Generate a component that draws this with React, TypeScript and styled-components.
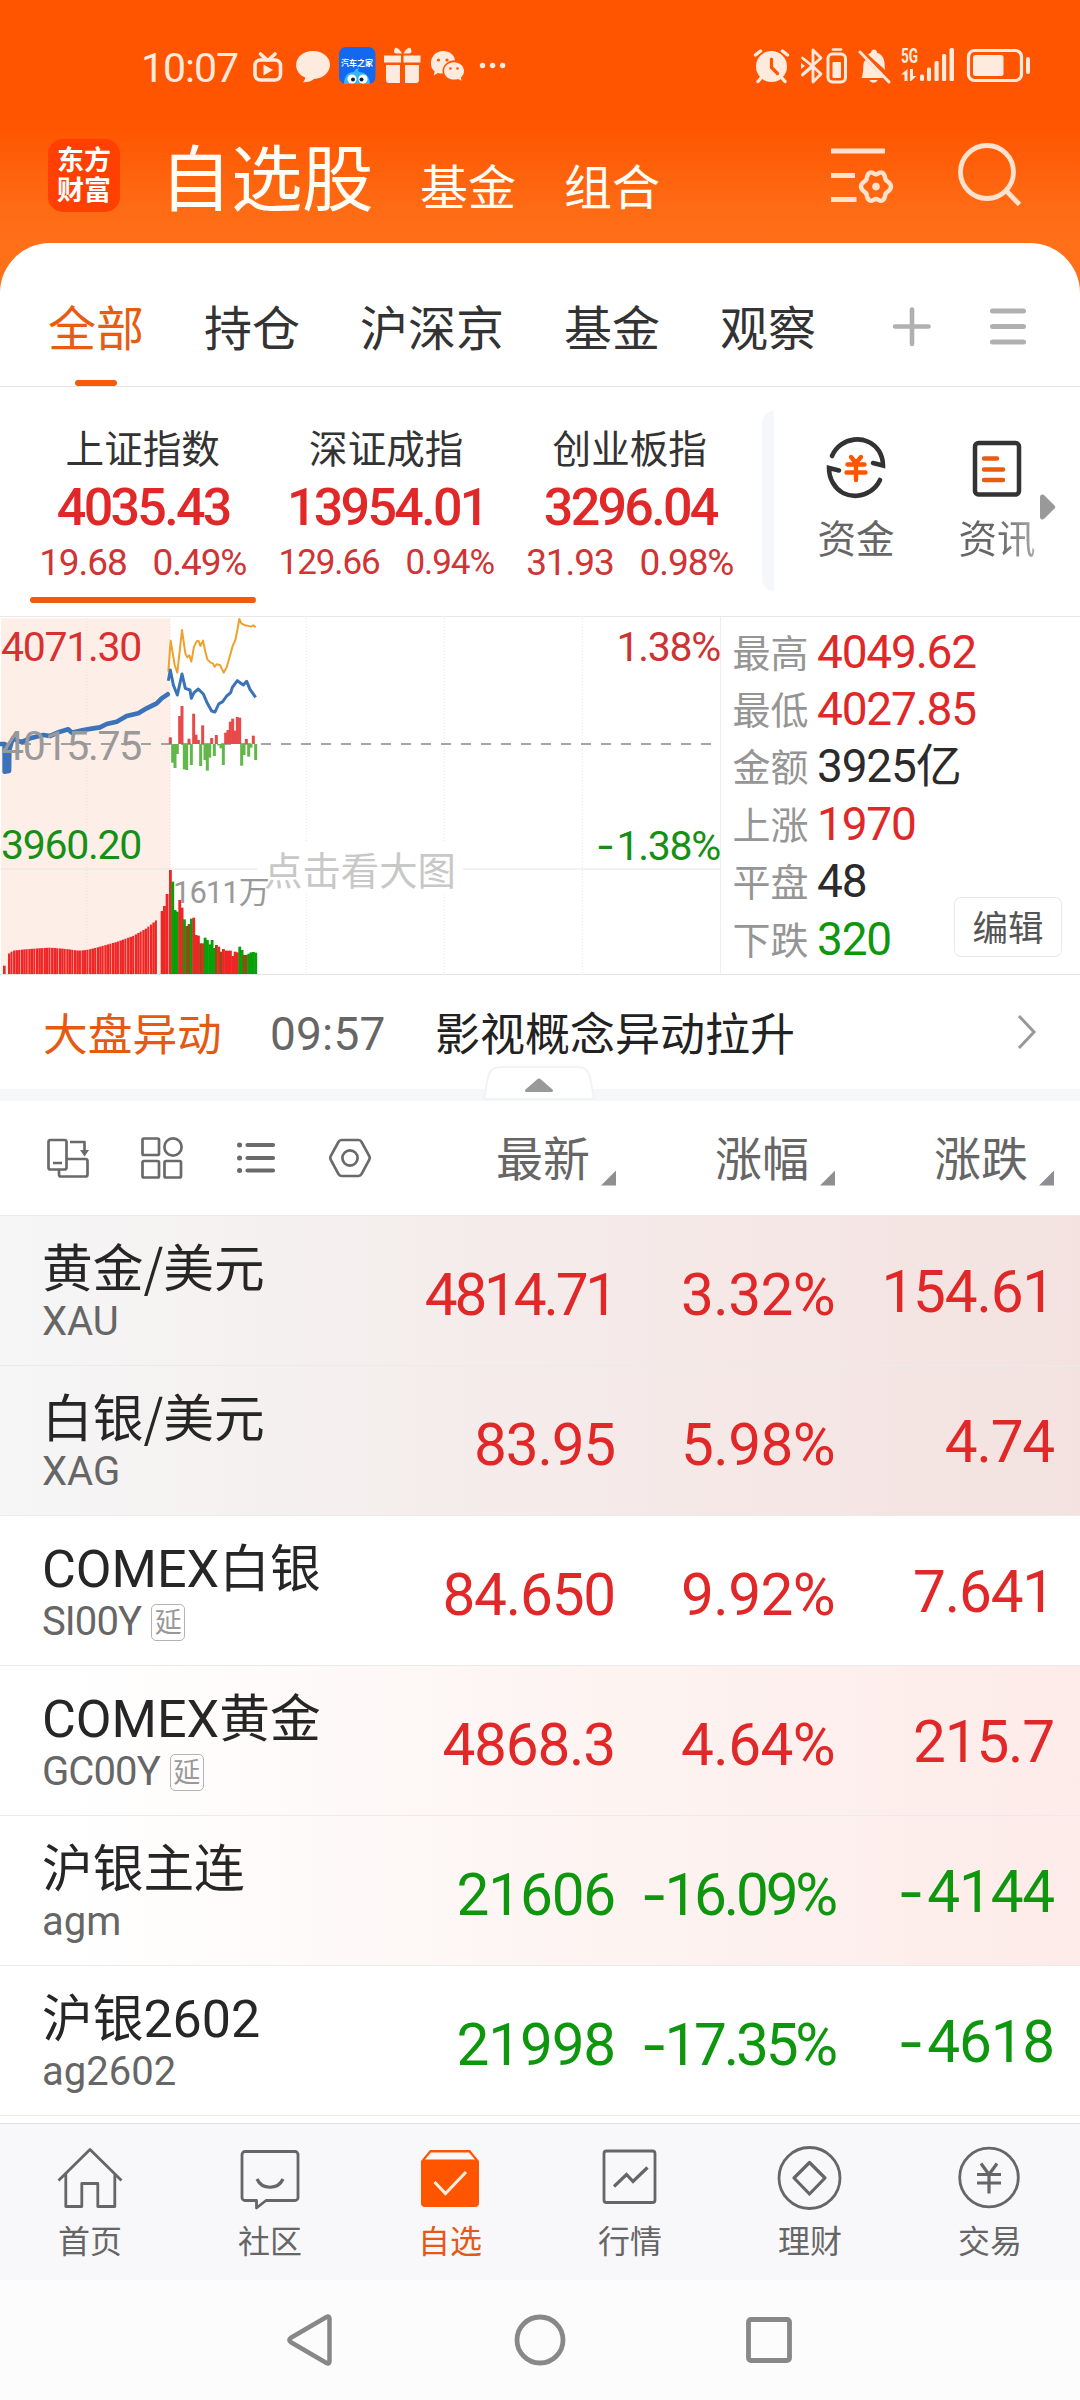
import React from "react";
import styled, { createGlobalStyle } from "styled-components";

const RED = "#e02828";
const GREEN = "#0e970e";
const ORANGE = "#ff5500";
const INK = "#2b2b2b";
const GRAY = "#666666";

const tone = { red: RED, green: GREEN, ink: INK, gray: GRAY };
type Tone = keyof typeof tone;

const Global = createGlobalStyle`
  * { box-sizing: border-box; }
  body { margin: 0; background: #fff; }
`;

const Page = styled.div`
  width: 1080px;
  height: 2400px;
  overflow: hidden;
  display: flex;
  flex-direction: column;
  background: #fff;
  color: ${INK};
  font-family: Roboto, "Noto Sans CJK SC", sans-serif;
`;

/* ---------- header ---------- */

const Top = styled.header`
  display: flex;
  flex-direction: column;
  background: linear-gradient(#ff5500 125px, #ff6a14 205px, #ff7019 243px);
`;

const StatusBar = styled.div`
  height: 130px;
  display: flex;
  align-items: center;
  justify-content: space-between;
  padding: 0 50px 0 141px;
  color: #ffeade;
`;

const StatusGroup = styled.div`
  display: flex;
  align-items: center;
`;

const Clock = styled.div`
  font-size: 41px;
  line-height: 48px;
  letter-spacing: -1px;
  width: 111px;
  padding-top: 5px;
`;

const TitleBar = styled.div`
  height: 113px;
  display: flex;
  padding: 0 58px 0 48px;
`;

const Logo = styled.div`
  width: 72px;
  height: 73px;
  margin-top: 9px;
  border-radius: 15px;
  background: #ff4000;
  color: #fff;
  display: grid;
  align-content: center;
  justify-content: center;
  font: 700 27px/30px "Noto Sans CJK SC", sans-serif;
  padding-bottom: 3px;
`;

const Titles = styled.nav`
  display: flex;
  align-items: baseline;
  margin-left: 40px;
  padding-top: 2px;
  flex: 1;
  color: #fffdf5;
  font-family: "Noto Sans CJK SC", sans-serif;
  line-height: 84px;
`;

const MainTitle = styled.span`
  font-size: 71.5px;
  letter-spacing: -0.5px;
  margin-right: 47px;
`;

const SubTitle = styled.span`
  font-size: 48px;
  margin-right: 48px;
`;

/* ---------- group tabs ---------- */

const Tabs = styled.div`
  height: 144px;
  display: flex;
  align-items: flex-start;
  gap: 60px;
  padding: 47px 52px 0 48px;
  border-bottom: 1px solid #e4e4e4;
  border-radius: 50px 50px 0 0;
  background: #fff;
`;

const Tab = styled.div<{ $active?: boolean }>`
  display: flex;
  flex-direction: column;
  align-items: center;
  font: 400 48px/70px "Noto Sans CJK SC", sans-serif;
  color: ${(p) => (p.$active ? "#e85c12" : "#333")};

  &::after {
    content: "";
    width: 42px;
    height: 6px;
    margin-top: 20px;
    border-radius: 3px;
    background: ${(p) => (p.$active ? "#f8590a" : "transparent")};
  }
`;

const TabTools = styled.div`
  margin: 12px 0 0 auto;
  display: flex;
  gap: 55px;
`;

/* ---------- index strip ---------- */

const Strip = styled.section`
  height: 229px;
  display: flex;
  padding-left: 21px;
`;

const IndexCell = styled.div`
  width: 243.5px;
  display: flex;
  flex-direction: column;
  align-items: center;
  padding-top: 37px;
  white-space: nowrap;
`;

const IndexName = styled.div`
  font: 400 38.6px/44px "Noto Sans CJK SC", sans-serif;
  color: #333;
`;

const IndexValue = styled.div`
  font-size: 52px;
  font-weight: 500;
  line-height: 52px;
  letter-spacing: -2.7px;
  margin: 14px 0 0 1px;
  color: ${RED};
`;

const IndexChange = styled.div<{ $size: number }>`
  display: flex;
  gap: 26px;
  margin-top: 9px;
  font-size: ${(p) => p.$size}px;
  line-height: 40px;
  letter-spacing: -1.1px;
  color: #d03434;
`;

const IndexMark = styled.div`
  width: 226px;
  height: 6px;
  margin-top: 14px;
  border-radius: 3px;
  background: #f25a0c;
`;

const StripEdge = styled.div`
  width: 12px;
  height: 180px;
  margin: 24px 0 0 10.5px;
  border-radius: 12px 0 0 12px;
  background: #f6f7fa;
`;

const Shortcut = styled.div<{ $left: number }>`
  display: flex;
  flex-direction: column;
  align-items: center;
  width: 78px;
  margin-left: ${(p) => p.$left}px;
  padding-top: 49px;
`;

const ShortcutText = styled.span<{ $fade?: boolean }>`
  font: 400 38.5px/44px "Noto Sans CJK SC", sans-serif;
  margin-top: 14px;
  color: ${GRAY};
  ${(p) =>
    p.$fade &&
    "background: linear-gradient(90deg, #666 50%, #aaa); background-clip: text; color: transparent;"}
`;

const MoreArrow = styled.svg`
  margin: 107px 0 0 4px;
`;

/* ---------- market chart ---------- */

const Market = styled.section`
  height: 359px;
  display: flex;
  border-top: 1px solid #e9e9e9;
  border-bottom: 1px solid #e4e4e4;
`;

const ChartBox = styled.div`
  position: relative;
  width: 721px;
  height: 357px;
  border-right: 1px solid #efefef;
`;

const ChartSvg = styled.svg`
  display: block;
`;

const ChartLabel = styled.span<{ $y: number; $c: string; $right?: boolean }>`
  position: absolute;
  top: ${(p) => p.$y}px;
  ${(p) => (p.$right ? "right: 0;" : "left: 1px;")}
  font-size: 41px;
  line-height: 44px;
  letter-spacing: -1.3px;
  color: ${(p) => p.$c};
`;

const VolumeLabel = styled.span`
  position: absolute;
  left: 173px;
  top: 256px;
  font-size: 31px;
  line-height: 40px;
  letter-spacing: -1px;
  color: #999;
`;

const TapHint = styled.span`
  position: absolute;
  left: 257px;
  top: 226px;
  width: 206px;
  text-align: center;
  font: 400 38.4px/50px "Noto Sans CJK SC", sans-serif;
  color: #c8c8c8;
  background: linear-gradient(90deg, transparent 10px, #fff 10px);
`;

const Facts = styled.div`
  flex: 1;
  display: flex;
  flex-direction: column;
  padding: 5px 0 0 11.5px;
`;

const Fact = styled.div`
  height: 57.4px;
  display: flex;
  align-items: center;
  gap: 8.5px;
`;

const FactName = styled.span`
  font: 400 38px/56px "Noto Sans CJK SC", sans-serif;
  color: #959595;
`;

const FactValue = styled.span<{ $tone: Tone }>`
  font-size: 46px;
  line-height: 57px;
  letter-spacing: -1.2px;
  padding-top: 3px;
  color: ${(p) => tone[p.$tone]};
`;

const EditButton = styled.button`
  align-self: flex-end;
  width: 108px;
  height: 60px;
  margin: -69px 18px 0 0;
  padding: 0 0 2px;
  border: 1.5px solid #e8e8e8;
  border-radius: 7px;
  background: #fff;
  color: #555;
  font: 400 35.5px/54px "Noto Sans CJK SC", sans-serif;
`;

/* ---------- news line ---------- */

const News = styled.section`
  position: relative;
  height: 126px;
  display: flex;
  align-items: flex-start;
  padding: 26px 42px 0 43px;
  border-bottom: 12px solid #f5f7f9;
  font-size: 45px;
  line-height: 62px;
  white-space: nowrap;
`;

const NewsTag = styled.span`
  width: 227px;
  font-family: "Noto Sans CJK SC", sans-serif;
  color: #e55a10;
  font-size: 44.7px;
`;

const NewsTime = styled.span`
  width: 165px;
  padding-top: 2px;
  font-size: 46px;
  letter-spacing: 0.2px;
  color: #666;
`;

const NewsText = styled.span`
  flex: 1;
  font-family: "Noto Sans CJK SC", sans-serif;
  color: #222;
`;

const NewsChevron = styled.svg`
  margin-top: 13px;
`;

const FoldHandle = styled.svg`
  position: absolute;
  left: 483px;
  top: 90px;
`;

/* ---------- table ---------- */

const TableHead = styled.section`
  height: 114px;
  display: flex;
  align-items: center;
  padding-left: 45px;
`;

const ViewIcons = styled.div`
  width: 352px;
  display: flex;
  gap: 48px;
`;

const HeadCell = styled.div`
  width: 219px;
  display: flex;
  justify-content: flex-end;
  align-items: flex-end;
  gap: 11px;
  padding-bottom: 5px;
  font: 400 47px/70px "Noto Sans CJK SC", sans-serif;
  color: #666;
`;

const SortMark = styled.i`
  width: 15px;
  height: 15px;
  margin-bottom: 5px;
  background: #8e8e93;
  clip-path: polygon(100% 0, 100% 100%, 0 100%);
`;

const rowFill = {
  plain: "#fff",
  held: "linear-gradient(90deg, #f6f6f6, #f4eeed 35%, #f5e9e8 62%, #f3e2e0)",
  flash: "linear-gradient(90deg, #fff 5%, #fdf6f4 45%, #fdebe9)",
};

const Row = styled.div<{ $fill: keyof typeof rowFill }>`
  height: 150px;
  display: grid;
  grid-template-columns: 353px 220px 220px 219px;
  padding-left: 42px;
  border-top: 1px solid #ebebeb;
  background: ${(p) => rowFill[p.$fill]};
  white-space: nowrap;
`;

const NameCell = styled.div`
  display: flex;
  flex-direction: column;
  padding-top: 16px;
`;

const StockName = styled.div`
  height: 66px;
  font: 400 50.7px/66px "Noto Sans CJK SC", sans-serif;
  color: #262626;
`;

const Latin = styled.span`
  font-family: Roboto, sans-serif;
  font-size: 52px;
  line-height: 0;
`;

const StockCode = styled.div<{ $tight?: boolean }>`
  display: flex;
  align-items: center;
  gap: 10px;
  height: 42px;
  margin-top: 3px;
  font-size: 40px;
  line-height: 42px;
  letter-spacing: ${(p) => (p.$tight ? -0.9 : 0)}px;
  color: ${GRAY};
`;

const DelayTag = styled.span`
  width: 34px;
  height: 37px;
  border: 1.5px solid #b4b4b4;
  border-radius: 5px;
  text-align: center;
  letter-spacing: 0;
  font: 400 27px/31px "Noto Sans CJK SC", sans-serif;
  color: #999;
`;

const Num = styled.div<{ $tone: Tone; $lift?: number; $space: number }>`
  display: flex;
  justify-content: flex-end;
  font-size: 58.5px;
  line-height: 60px;
  padding-top: ${(p) => 49 - (p.$lift ?? 0)}px;
  letter-spacing: ${(p) => p.$space}px;
  color: ${(p) => tone[p.$tone]};
`;

const Minus = styled.span<{ $gap: number }>`
  font-family: Inter, sans-serif;
  margin-right: ${(p) => p.$gap}px;
`;

const TableEnd = styled.div`
  height: 8px;
  border-top: 1px solid #ebebeb;
`;

/* ---------- bottom bars ---------- */

const NavBar = styled.nav`
  height: 157px;
  display: grid;
  grid-template-columns: repeat(6, 1fr);
  border-top: 1px solid #e2e2e2;
  background: #f8f8fa;
`;

const NavItem = styled.div<{ $active?: boolean }>`
  display: flex;
  flex-direction: column;
  align-items: center;
  padding-top: 20px;
  font: 400 32px/44px "Noto Sans CJK SC", sans-serif;
  color: ${(p) => (p.$active ? "#e2591a" : "#666")};

  svg {
    margin-bottom: 7px;
  }
`;

const SystemBar = styled.div`
  height: 120px;
  display: flex;
  justify-content: center;
  align-items: center;
  gap: 177px;
  background: #fcfcfc;
`;

/* ---------- status icons, drawn on one canvas per side ---------- */

const LeftStatusIcons = () => (
  <svg width="256" height="40" viewBox="252 45 256 40" fill="#ffeade">
    <g fill="none" stroke="#ffeade" strokeWidth="3.6" strokeLinecap="round">
      <rect x="255" y="60" width="25.500" height="20" rx="5.500" />
      <path d="M260.500 54l6 5.500M275 54l-6 5.500" />
    </g>
    <path d="M263.500 64.500v11l9.500-5.500z" />
    <path d="M313 51c9.500 0 17 6 17 13.800s-7.500 14-16 14.200c-3 2.500-7 3.500-11 3.200 1.500-1.600 2.200-3 2.100-4.700-5.500-2.300-9-7.200-9-12.600C296.100 57 303.500 51 313 51z" />
    <rect x="339" y="47" width="36.500" height="37" rx="7" fill="#1368f0" />
    <path d="M344 84c0-8 4-12 10-12 1-3 3-4 5-4-1 2-1 3 0 4 6 0 11 4 11 12z" fill="#35b4f5" />
    <circle cx="352" cy="79" r="4.600" fill="#fff" />
    <circle cx="363" cy="79" r="4.600" fill="#fff" />
    <circle cx="353" cy="79.500" r="2" fill="#123" />
    <circle cx="361.500" cy="79.500" r="2" fill="#123" />
    <text x="357" y="66" fontSize="8" fontWeight="700" fill="#fff" textAnchor="middle" fontFamily="Noto Sans CJK SC, sans-serif">
      汽车之家
    </text>
    <path d="M384 55.500h17v7h-17zM403.500 55.500h17v7h-17zM386 65h14v18h-11a3 3 0 0 1-3-3zM405 65h14v15a3 3 0 0 1-3 3h-11z" />
    <path d="M402 53.500c-3 0-8 .5-8-1.500 0-3 1-4.500 2.500-4.200 2 .5 4 3.200 5.500 5.700zM403.500 53.500c3 0 8 .5 8-1.500 0-3-1-4.500-2.500-4.200-2 .5-4 3.200-5.500 5.700z" />
    <path d="M443 51c6.600 0 11.400 4 12 9.200-7 0-12.500 4.800-12.500 10.800 0 1 .1 1.800.4 2.600-1.700 0-3.400-.2-5-.7l-4.200 2.500 1-4c-2.500-2-3.800-4.800-3.800-8C430.900 56.500 436.300 51 443 51z" />
    <path d="M454 62.300c5.600 0 10 3.900 10 8.700 0 2.700-1.300 5-3.200 6.500l.7 3.200-3.400-1.700c-1.300.4-2.600.6-4 .6-5.600 0-10-3.900-10-8.700s4.300-8.600 9.900-8.600z" />
    <g fill={ORANGE}>
      <circle cx="438.500" cy="60" r="1.600" />
      <circle cx="447" cy="60" r="1.600" />
      <circle cx="450.500" cy="68.500" r="1.300" />
      <circle cx="457.500" cy="68.500" r="1.300" />
    </g>
    <circle cx="482.500" cy="65.500" r="2.700" />
    <circle cx="492.600" cy="65.500" r="2.700" />
    <circle cx="502.600" cy="65.500" r="2.700" />
  </svg>
);

const RightStatusIcons = () => (
  <svg width="278" height="40" viewBox="752 45 278 40" fill="#ffeade">
    <circle cx="771.500" cy="66.500" r="15.500" />
    <path d="M771.500 59v8.500l6 6" fill="none" stroke={ORANGE} strokeWidth="3.200" strokeLinecap="round" />
    <g fill="none" stroke="#ffeade" strokeWidth="3.400" strokeLinecap="round">
      <path d="M755.500 55l5-4M787.500 55l-5-4M761 78l-3 3.500M782 78l3 3.500" />
      <path d="M802.500 58l10.500 8.500V50l8 8-18.500 16.500M802.500 75l10.500-8.500V82l8-8-8-7.500" strokeWidth="2.800" strokeLinejoin="round" />
      <path d="M833 49.500h8" strokeWidth="2.600" />
      <rect x="828" y="54" width="17.500" height="28" rx="4.500" strokeWidth="3" />
    </g>
    <path d="M801 63l4 3-4 3z" />
    <rect x="832.500" y="62" width="8.500" height="16" rx="1" />
    <path d="M861.500 78c2-4 1.500-10 2-14 .3-1.600 1-3 2-4l18 18zM868 54.500c1.500-1.300 3-1.700 3-1.700 0-4.500 6-4.500 6 0 5.500 1.800 7.500 6.500 7.600 11 .1 2.500.2 4.500.6 6.200zM869.500 80h8c-1 3.500-7 3.500-8 0z" />
    <path d="M860 52l29 30" stroke="#ffeade" strokeWidth="3" strokeLinecap="round" />
    <text x="901" y="63" fontSize="20.500" fontWeight="700" textLength="17" lengthAdjust="spacingAndGlyphs" fontFamily="Roboto, sans-serif">
      5G
    </text>
    <path d="M907.500 69v12h-3v-6.500H901zM910 69h3v7h3.500l-5.500 5H910z" />
    <g>
      <rect x="920" y="74.500" width="4" height="6.500" rx="1.500" />
      <rect x="927" y="67.500" width="4" height="13.500" rx="1.500" />
      <rect x="934.500" y="61" width="4.200" height="20" rx="1.500" />
      <rect x="942" y="54" width="4.200" height="27" rx="1.500" />
      <rect x="949.500" y="48" width="4.500" height="33" rx="1.500" />
    </g>
    <rect x="968.500" y="50.500" width="53" height="30" rx="6" fill="none" stroke="#ffeade" strokeWidth="3.200" />
    <rect x="973" y="55" width="30.500" height="21" rx="2.500" />
    <rect x="1026" y="57" width="4" height="17" rx="2" />
  </svg>
);

const FilterIcon = () => (
  <svg width="64" height="60" viewBox="830 146 64 60" fill="none" stroke="#ffe2cd">
    <path d="M831 151h54M831 175.500h24M831 199.500h25.500" strokeWidth="5" />
    <path
      d="M869.500 172.800c2.800-1.600 4.300 1.400 6.500 1.400s3.700-3 6.500-1.400c3 1.700 2.300 4.900 3.200 6.900 1 1.900 5.300 2.600 5.300 6.900s-4.300 5-5.300 6.900c-.9 2-.2 5.200-3.200 6.900-2.800 1.600-4.300-1.400-6.500-1.400s-3.700 3-6.500 1.400c-3-1.700-2.300-4.900-3.200-6.900-1-1.900-5.300-2.600-5.300-6.900s4.300-5 5.300-6.900c.9-2 .2-5.200 3.200-6.900z"
      strokeWidth="4.400"
    />
    <circle cx="876" cy="186.600" r="3.800" fill="#ffe2cd" stroke="none" />
  </svg>
);

const SearchIcon = () => (
  <svg width="66" height="66" viewBox="956 141 66 66" fill="none" stroke="#ffe2cd" strokeWidth="4.800">
    <circle cx="987" cy="172" r="26.500" />
    <path d="M1006 190.500l13.500 14" />
  </svg>
);

const HeaderTools = styled.div`
  display: flex;
  align-items: flex-start;
  gap: 62px;
  padding-top: 11px;

  svg:first-child {
    margin-top: 5px;
  }
`;

/* ---------- chart data, in a 3x canvas whose origin is the chart's top-left ---------- */

const avgLine =
  "3,402 14,402 14,485 27,483 28,420 34,398 40,384 52,392 65,396 90,385 130,375 150,378 180,365 205,358 215,368 250,360 280,355 300,352 320,342 350,335 380,318 415,310 440,295 470,280 485,265 503,253";
const priceLine =
  "505,212 511,180 520,225 532,255 546,192 556,235 570,240 574,265 582,248 595,237 610,252 622,280 635,303 645,306 656,282 668,275 680,258 692,248 697,232 712,212 730,225 740,214 750,238 767,262";
const leadLine =
  "505,185 512,92 524,165 532,188 546,60 556,130 562,142 568,136 574,155 582,110 590,94 596,93 601,108 609,92 616,125 622,148 632,158 638,160 644,170 650,163 660,165 671,188 680,172 692,130 698,108 706,90 712,60 718,27 724,40 735,46 742,47 752,50 760,46 767,52";

const flow: [number, number][] = [
  [511, 382], [518, 458], [525, 474], [532, 432], [539, 318], [546, 288], [553, 478], [560, 480], [567, 386],
  [574, 465], [581, 311], [588, 374], [595, 390], [602, 468], [608, 346], [615, 450], [622, 482], [629, 443],
  [635, 384], [643, 438], [649, 375], [656, 406], [663, 415], [670, 465], [677, 368], [684, 360], [691, 335],
  [698, 326], [705, 362], [712, 321], [719, 323], [725, 467], [732, 435], [739, 387], [746, 440], [753, 413],
  [760, 377], [767, 450],
];

const volume: [number, number, string][] = [
  [486, 903, "r"], [493, 888, "r"], [501, 852, "r"], [511, 780, "r"], [518, 815, "g"], [525, 900, "g"],
  [532, 905, "g"], [539, 870, "r"], [546, 893, "r"], [553, 928, "g"], [560, 948, "b"], [567, 942, "b"],
  [574, 926, "g"], [581, 923, "r"], [588, 975, "r"], [595, 977, "r"], [602, 1000, "b"], [608, 1000, "r"],
  [615, 983, "g"], [622, 990, "g"], [629, 1003, "g"], [636, 990, "g"], [643, 1014, "g"], [649, 1005, "b"],
  [656, 1010, "r"], [663, 1025, "b"], [670, 1017, "r"], [677, 1022, "r"], [684, 1022, "r"], [691, 1022, "r"],
  [698, 1038, "r"], [705, 1025, "r"], [712, 1027, "r"], [719, 1010, "g"], [726, 1020, "g"], [732, 1035, "b"],
  [739, 1035, "b"], [746, 1031, "g"], [753, 1027, "g"], [760, 1026, "g"], [767, 1028, "g"],
];
const volumeFill: Record<string, string> = { r: "#ef2626", g: "#08a008", b: "#8c5010" };

const auctionTops: [number, number][] = [
  [27, 1031], [40, 1022], [75, 1018], [115, 1015], [150, 1013], [200, 1017], [235, 1022], [260, 1020],
  [290, 1013], [350, 996], [400, 978], [440, 955], [480, 922],
];
const topAt = (x: number) => {
  const i = auctionTops.findIndex(([px]) => px > x);
  const [x0, y0] = auctionTops[i - 1];
  const [x1, y1] = auctionTops[i];
  return y0 + ((y1 - y0) * (x - x0)) / (x1 - x0);
};
const auctionBars = Array.from({ length: 59 }, (_, i) => 28 + i * 7.6)
  .filter((x) => x < 478)
  .map((x): [number, number] => [x, topAt(x)]);

function MarketChart() {
  return (
    <ChartSvg width="720" height="357" viewBox="0 21 2160 1071" preserveAspectRatio="none">
      <rect x="3" y="25" width="507" height="1070" fill="#fdeee8" />
      <g stroke="#e6e6e6" strokeWidth="3" strokeDasharray="3 6">
        {[260, 510, 919, 1333, 1747].map((x) => (
          <path key={x} d={`M${x} 24V1092`} />
        ))}
      </g>
      <path d="M0 777H772M1383 777H2160" stroke="#e8e6e6" strokeWidth="3" />
      <path d="M3 402H2135" stroke="#888" strokeWidth="5" strokeDasharray="30 30" />
      <polyline points={avgLine} fill="none" stroke="#3a73b8" strokeWidth="14" strokeLinejoin="round" strokeLinecap="round" />
      <polyline points={leadLine} fill="none" stroke="#eda22c" strokeWidth="6" strokeLinejoin="round" />
      <polyline points={priceLine} fill="none" stroke="#3a73b8" strokeWidth="9" strokeLinejoin="round" />
      {flow.map(([x, y]) => (
        <rect
          key={x}
          x={x - 4.500}
          y={Math.min(402, y)}
          width="9"
          height={Math.abs(y - 402)}
          fill={y < 402 ? "#e84a4a" : "#62b64a"}
        />
      ))}
      <rect x="9" y="1067" width="8" height="28" fill="#ef2626" />
      {auctionBars.map(([x, y], i) => (
        <rect key={x} x={x - 4} y={y} width={i % 3 === 1 ? 6 : 7.4} height={1095 - y} fill="#ef2626" />
      ))}
      {volume.map(([x, y, k]) => (
        <rect key={x} x={x - 4} y={y} width="8.500" height={1095 - y} fill={volumeFill[k]} />
      ))}
    </ChartSvg>
  );
}

/* ---------- content ---------- */

const indices = [
  { name: "上证指数", value: "4035.43", diff: "19.68", pct: "0.49%", size: 37, on: true },
  { name: "深证成指", value: "13954.01", diff: "129.66", pct: "0.94%", size: 35 },
  { name: "创业板指", value: "3296.04", diff: "31.93", pct: "0.98%", size: 37 },
];

const facts: [string, string, Tone][] = [
  ["最高", "4049.62", "red"],
  ["最低", "4027.85", "red"],
  ["金额", "3925亿", "ink"],
  ["上涨", "1970", "red"],
  ["平盘", "48", "ink"],
  ["下跌", "320", "green"],
];

type Stock = {
  pre?: string;
  name: string;
  post?: string;
  code: string;
  delayed?: boolean;
  price: string;
  pct: string;
  diff: string;
  tone: Tone;
  fill: keyof typeof rowFill;
};

const stocks: Stock[] = [
  { name: "黄金/美元", code: "XAU", price: "4814.71", pct: "3.32%", diff: "154.61", tone: "red", fill: "held" },
  { name: "白银/美元", code: "XAG", price: "83.95", pct: "5.98%", diff: "4.74", tone: "red", fill: "held" },
  { pre: "COMEX", name: "白银", code: "SI00Y", delayed: true, price: "84.650", pct: "9.92%", diff: "7.641", tone: "red", fill: "plain" },
  { pre: "COMEX", name: "黄金", code: "GC00Y", delayed: true, price: "4868.3", pct: "4.64%", diff: "215.7", tone: "red", fill: "flash" },
  { name: "沪银主连", code: "agm", price: "21606", pct: "-16.09%", diff: "-4144", tone: "green", fill: "flash" },
  { name: "沪银", post: "2602", code: "ag2602", price: "21998", pct: "-17.35%", diff: "-4618", tone: "green", fill: "plain" },
];

/* seven characters no longer fit a column, so they are set closer */
const spacing = (text: string, normal: number) => (text.length > 6 ? -3.2 : normal);

const Signed = ({ text, gap = 0 }: { text: string; gap?: number }) =>
  text.startsWith("-") ? (
    <>
      <Minus $gap={gap}>-</Minus>
      {text.slice(1)}
    </>
  ) : (
    <>{text}</>
  );

const NavSvg = ({ children }: { children: React.ReactNode }) => (
  <svg width="66" height="66" viewBox="0 0 66 66" fill="none" stroke="#666" strokeWidth="2.800" strokeLinejoin="round">
    {children}
  </svg>
);

const ViewSvg = ({ children }: { children: React.ReactNode }) => (
  <svg width="46" height="46" viewBox="0 0 46 46" fill="none" stroke="#6a6a6a" strokeWidth="2.700" strokeLinejoin="round">
    {children}
  </svg>
);

export default function App() {
  return (
    <Page>
      <Global />
      <Top>
        <StatusBar>
          <StatusGroup>
            <Clock>10:07</Clock>
            <LeftStatusIcons />
          </StatusGroup>
          <RightStatusIcons />
        </StatusBar>
        <TitleBar>
          <Logo>
            <span>东方</span>
            <span>财富</span>
          </Logo>
          <Titles>
            <MainTitle>自选股</MainTitle>
            <SubTitle>基金</SubTitle>
            <SubTitle>组合</SubTitle>
          </Titles>
          <HeaderTools>
            <FilterIcon />
            <SearchIcon />
          </HeaderTools>
        </TitleBar>
        <Tabs>
          <Tab $active>全部</Tab>
          <Tab>持仓</Tab>
          <Tab>沪深京</Tab>
          <Tab>基金</Tab>
          <Tab>观察</Tab>
          <TabTools>
            <svg width="46" height="50" viewBox="0 0 46 50" stroke="#b0b0b0" strokeWidth="4.600" strokeLinecap="round">
              <path d="M8 24.500h33.500M25 7.500v34.500" />
            </svg>
            <svg width="40" height="50" viewBox="0 0 40 50" stroke="#b0b0b0" strokeWidth="5" strokeLinecap="round">
              <path d="M4.500 9h31M4.500 24.500h31M4.500 40h31" />
            </svg>
          </TabTools>
        </Tabs>
      </Top>

      <Strip>
        {indices.map((it) => (
          <IndexCell key={it.name}>
            <IndexName>{it.name}</IndexName>
            <IndexValue>{it.value}</IndexValue>
            <IndexChange $size={it.size}>
              <span>{it.diff}</span>
              <span>{it.pct}</span>
            </IndexChange>
            {it.on && <IndexMark />}
          </IndexCell>
        ))}
        <StripEdge />
        <Shortcut $left={43}>
          <svg width="62" height="64" viewBox="0 0 62 64" fill="none" stroke="#333" strokeWidth="4.600" strokeLinecap="round">
            <path d="M7 20C15 1 42-3 54 15c3 5 4 9 4 14.500l-10-2.500" />
            <path d="M55 44C46 63 19 66 8 47c-3-5-4-9-4-15l10 2.500" />
            <g stroke={ORANGE} strokeWidth="4.400">
              <path d="M26 21l5 6 5-6M22.500 28.500h17M21.500 36.500h19M31 28v16" />
            </g>
          </svg>
          <ShortcutText>资金</ShortcutText>
        </Shortcut>
        <Shortcut $left={63}>
          <svg width="54" height="64" viewBox="0 0 54 64" fill="none" stroke="#333" strokeWidth="4.500" strokeLinecap="round">
            <rect x="5" y="7" width="44" height="51.500" rx="3.500" />
            <path d="M14 22.500h13M14 33.500h19M14 44h19" stroke="#e85c12" />
          </svg>
          <ShortcutText $fade>资讯</ShortcutText>
        </Shortcut>
        <MoreArrow width="16" height="26" viewBox="0 0 16 26" fill="#999">
          <path d="M0 3c0-2.500 2.500-3.500 4.500-1.500l10 10c1 1 1 2 0 3l-10 10C2.500 26.500 0 25.500 0 23z" />
        </MoreArrow>
      </Strip>

      <Market>
        <ChartBox>
          <MarketChart />
          <ChartLabel $y={8} $c="#d83030">4071.30</ChartLabel>
          <ChartLabel $y={107} $c="#999">4015.75</ChartLabel>
          <ChartLabel $y={206} $c="#159015">3960.20</ChartLabel>
          <ChartLabel $y={8} $c="#cc3434" $right>1.38%</ChartLabel>
          <ChartLabel $y={206} $c="#159015" $right>
            <Signed text="-1.38%" gap={3} />
          </ChartLabel>
          <TapHint>点击看大图</TapHint>
          <VolumeLabel>1611万</VolumeLabel>
        </ChartBox>
        <Facts>
          {facts.map(([name, value, t]) => (
            <Fact key={name}>
              <FactName>{name}</FactName>
              <FactValue $tone={t}>{value}</FactValue>
            </Fact>
          ))}
          <EditButton>编辑</EditButton>
        </Facts>
      </Market>

      <News>
        <NewsTag>大盘异动</NewsTag>
        <NewsTime>09:57</NewsTime>
        <NewsText>影视概念异动拉升</NewsText>
        <NewsChevron width="22" height="36" viewBox="0 0 22 36" fill="none" stroke="#999" strokeWidth="3">
          <path d="M3 2l15 16L3 34" />
        </NewsChevron>
        <FoldHandle width="112" height="36" viewBox="0 0 112 36">
          <path d="M1 34L5 12C7 5 10 2 18 2h76c8 0 11 3 13 10l4 22z" fill="#fff" stroke="#f1f3f5" strokeWidth="2" />
          <path d="M54 14.500c1-1.500 3-1.500 4 0l11.500 10c1 1.500.5 2.500-1 2.500h-25c-1.500 0-2-1-1-2.500z" fill="#999" />
        </FoldHandle>
      </News>

      <TableHead>
        <ViewIcons>
          <ViewSvg>
            <rect x="3.500" y="5" width="18" height="29.500" rx="2" />
            <path d="M8 28h9M21.500 24h19a2 2 0 0 1 2 2v13.500a2 2 0 0 1-2 2H16a2 2 0 0 1-2-2v-5M25 7h14.500v10" />
            <path d="M35 15h9l-4.500 6.500z" fill="#6a6a6a" stroke="none" />
          </ViewSvg>
          <ViewSvg>
            <rect x="3.500" y="3.500" width="16.500" height="16.500" rx="1.500" />
            <circle cx="34" cy="12" r="8.600" />
            <rect x="3.500" y="26" width="16.500" height="16.500" rx="1.500" />
            <rect x="25.500" y="26" width="16.500" height="16.500" rx="1.500" />
          </ViewSvg>
          <ViewSvg>
            <g strokeWidth="4.200" strokeLinecap="round">
              <path d="M14.500 10h25.500M14.500 23h25.500M14.500 35.500h25.500" />
              <path d="M6.500 10h.1M6.500 23h.1M6.500 35.500h.1" strokeWidth="5" />
            </g>
          </ViewSvg>
          <ViewSvg>
            <path d="M14.500 5h17a3.500 3.500 0 0 1 3 1.800l7.800 14.400a3.500 3.500 0 0 1 0 3.400l-7.800 14.600a3.500 3.500 0 0 1-3 1.800h-17a3.500 3.500 0 0 1-3-1.800L3.700 24.600a3.500 3.500 0 0 1 0-3.400l7.800-14.400a3.500 3.500 0 0 1 3-1.800z" />
            <circle cx="23" cy="23" r="7.600" />
          </ViewSvg>
        </ViewIcons>
        {["最新", "涨幅", "涨跌"].map((label) => (
          <HeadCell key={label}>
            {label}
            <SortMark />
          </HeadCell>
        ))}
      </TableHead>

      {stocks.map((s) => (
        <Row key={s.code} $fill={s.fill}>
          <NameCell>
            <StockName>
              {s.pre && <Latin>{s.pre}</Latin>}
              {s.name}
              {s.post && <Latin>{s.post}</Latin>}
            </StockName>
            <StockCode $tight={s.delayed}>
              {s.code}
              {s.delayed && <DelayTag>延</DelayTag>}
            </StockCode>
          </NameCell>
          <Num $tone={s.tone} $space={spacing(s.price, -1.2)}>
            {s.price}
          </Num>
          <Num $tone={s.tone} $space={spacing(s.pct, -0.6)}>
            <Signed text={s.pct} />
          </Num>
          <Num $tone={s.tone} $lift={3} $space={-1.2}>
            <Signed text={s.diff} gap={4} />
          </Num>
        </Row>
      ))}
      <TableEnd />

      <NavBar>
        <NavItem>
          <NavSvg>
            <path d="M1.500 36.500L33 5.500l31.500 31M8.800 30v32.500h16V39.500h16v23h17V30" />
          </NavSvg>
          首页
        </NavItem>
        <NavItem>
          <NavSvg>
            <path d="M8 7.500h50a3 3 0 0 1 3 3v43a3 3 0 0 1-3 3H29l-9.500 7.500v-7.500H8a3 3 0 0 1-3-3v-43a3 3 0 0 1 3-3z" />
            <path d="M20 35c5 11 21 11 26 0" strokeWidth="3.200" />
          </NavSvg>
          社区
        </NavItem>
        <NavItem $active>
          <NavSvg>
            <path d="M4 17L13 6h40l9 11v42a4 4 0 0 1-4 4H8a4 4 0 0 1-4-4z" fill={ORANGE} stroke="none" />
            <path d="M14 8.500h38l6 7H8z" fill="#f8f8fa" stroke="none" />
            <path d="M17.500 38L28.500 49.500 49 28" stroke="#fff0e2" strokeWidth="3" strokeLinejoin="miter" />
          </NavSvg>
          自选
        </NavItem>
        <NavItem>
          <NavSvg>
            <rect x="7" y="7" width="51" height="51.500" rx="2.500" />
            <path d="M17 42.500l12.500-12 6.500 7 14.500-14" strokeWidth="3.200" strokeLinejoin="miter" />
          </NavSvg>
          行情
        </NavItem>
        <NavItem>
          <NavSvg>
            <circle cx="32.500" cy="34" r="30.500" />
            <path d="M32.500 18.500L48 34 32.500 50 17 34z" strokeWidth="3.200" />
          </NavSvg>
          理财
        </NavItem>
        <NavItem>
          <NavSvg>
            <circle cx="32" cy="33.500" r="29.300" />
            <path d="M24 19.500l8 11 8-11M20 30.500h24M20 39h24M32 30.500v19" strokeWidth="3.200" />
          </NavSvg>
          交易
        </NavItem>
      </NavBar>

      <SystemBar>
        <svg width="50" height="54" viewBox="0 0 50 54" fill="none" stroke="#888" strokeWidth="4.500" strokeLinejoin="round">
          <path d="M43.500 5.500c0-2-1.500-2.500-3-1.500L4.500 25c-1.500 1-1.500 3 0 4l36 21c1.500 1 3 .5 3-1.500z" />
        </svg>
        <svg width="54" height="54" viewBox="0 0 54 54" fill="none" stroke="#888" strokeWidth="4.800">
          <circle cx="27" cy="27" r="23" />
        </svg>
        <svg width="50" height="54" viewBox="0 0 50 54" fill="none" stroke="#888" strokeWidth="4.800">
          <rect x="4.500" y="6.500" width="41" height="41" rx="2.500" />
        </svg>
      </SystemBar>
    </Page>
  );
}
